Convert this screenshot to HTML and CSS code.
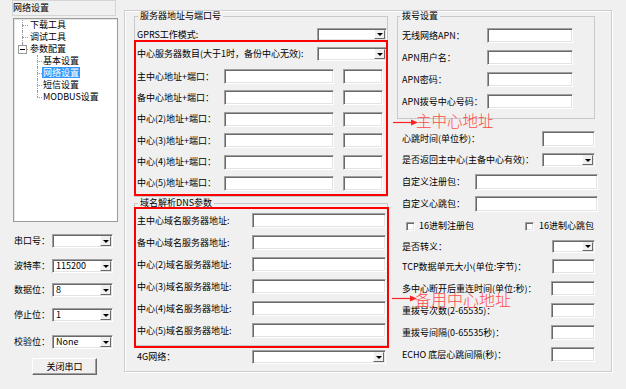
FILE: index.html
```html
<!DOCTYPE html>
<html lang="zh">
<head>
<meta charset="utf-8">
<title>网络设置</title>
<link rel="stylesheet" href="styles.css">
</head>
<body>
<div class="app">
  <aside class="side">
    <div class="side-title">网络设置</div>
    <div class="tree">
      <ul class="tree-l1">
        <li>下载工具</li>
        <li>调试工具</li>
        <li><span class="toggle"></span>参数配置
          <ul class="tree-l2">
            <li>基本设置</li>
            <li><span class="sel">网络设置</span></li>
            <li>短信设置</li>
            <li>MODBUS设置</li>
          </ul>
        </li>
      </ul>
    </div>
    <div class="serial">
      <div class="srow"><span>串口号：</span><div class="combo c-serial"><span class="cval"></span><span class="cbtn"></span></div></div>
      <div class="srow"><span>波特率：</span><div class="combo c-serial"><span class="cval">115200</span><span class="cbtn"></span></div></div>
      <div class="srow"><span>数据位：</span><div class="combo c-serial"><span class="cval">8</span><span class="cbtn"></span></div></div>
      <div class="srow"><span>停止位：</span><div class="combo c-serial"><span class="cval">1</span><span class="cbtn"></span></div></div>
      <div class="srow"><span>校验位：</span><div class="combo c-serial"><span class="cval">None</span><span class="cbtn"></span></div></div>
    </div>
    <button class="btn">关闭串口</button>
  </aside>

  <main class="outer">
    <div class="col-l">
      <fieldset class="group g-server">
        <legend>服务器地址与端口号</legend>
        <div class="srv-row r-gprs"><span>GPRS工作模式:</span><div class="combo c-srv"><span class="cval"></span><span class="cbtn"></span></div></div>
        <div class="srv-row r-count"><span>中心服务器数目(大于1时，备份中心无效):</span><div class="combo c-srv"><span class="cval"></span><span class="cbtn"></span></div></div>
        <div class="addr"><span class="lbl-addr">主中心地址+端口：</span><span class="field f-host"></span><span class="field f-port"></span></div>
        <div class="addr"><span class="lbl-addr">备中心地址+端口：</span><span class="field f-host"></span><span class="field f-port"></span></div>
        <div class="addr"><span class="lbl-addr">中心(2)地址+端口：</span><span class="field f-host"></span><span class="field f-port"></span></div>
        <div class="addr"><span class="lbl-addr">中心(3)地址+端口：</span><span class="field f-host"></span><span class="field f-port"></span></div>
        <div class="addr"><span class="lbl-addr">中心(4)地址+端口：</span><span class="field f-host"></span><span class="field f-port"></span></div>
        <div class="addr"><span class="lbl-addr">中心(5)地址+端口：</span><span class="field f-host"></span><span class="field f-port"></span></div>
      </fieldset>
      <fieldset class="group g-dns">
        <legend>域名解析DNS参数</legend>
        <div class="dns-row"><span class="lbl-dns">主中心域名服务器地址:</span><span class="field f-dns"></span></div>
        <div class="dns-row"><span class="lbl-dns">备中心域名服务器地址:</span><span class="field f-dns"></span></div>
        <div class="dns-row"><span class="lbl-dns">中心(2)域名服务器地址:</span><span class="field f-dns"></span></div>
        <div class="dns-row"><span class="lbl-dns">中心(3)域名服务器地址:</span><span class="field f-dns"></span></div>
        <div class="dns-row"><span class="lbl-dns">中心(4)域名服务器地址:</span><span class="field f-dns"></span></div>
        <div class="dns-row"><span class="lbl-dns">中心(5)域名服务器地址:</span><span class="field f-dns"></span></div>
      </fieldset>
      <div class="row-4g"><span class="lbl-dns">4G网络：</span><div class="combo c-4g"><span class="cval"></span><span class="cbtn"></span></div></div>
    </div>

    <div class="col-r">
      <fieldset class="group g-dial">
        <legend>拨号设置</legend>
        <div class="dial-row"><span class="lbl-dial">无线网络APN：</span><span class="field f-dial"></span></div>
        <div class="dial-row"><span class="lbl-dial">APN用户名：</span><span class="field f-dial"></span></div>
        <div class="dial-row"><span class="lbl-dial">APN密码：</span><span class="field f-dial"></span></div>
        <div class="dial-row"><span class="lbl-dial">APN拨号中心号码：</span><span class="field f-dial"></span></div>
      </fieldset>
      <div class="rrow r1"><span>心跳时间(单位秒)：</span><span class="field w53 h16 mr3"></span></div>
      <div class="rrow r2"><span>是否返回主中心(主备中心有效)：</span><div class="combo w53 mr3"><span class="cval"></span><span class="cbtn"></span></div></div>
      <div class="rrow r3"><span>自定义注册包：</span><span class="field w123 h16"></span></div>
      <div class="rrow r4"><span>自定义心跳包：</span><span class="field w123 h16"></span></div>
      <div class="rrow r5 checks">
        <label class="chk"><span class="box"></span>16进制注册包</label>
        <label class="chk"><span class="box"></span>16进制心跳包</label>
      </div>
      <div class="rrow r6"><span>是否转义：</span><div class="combo w43 h13 mr3"><span class="cval"></span><span class="cbtn"></span></div></div>
      <div class="rrow r7"><span>TCP数据单元大小(单位:字节)：</span><span class="field w43 mr3"></span></div>
      <div class="rrow r8"><span>多中心断开后重连时间(单位:秒)：</span><span class="field w44 mr3"></span></div>
      <div class="rrow r8"><span>重拨号次数(2-65535)：</span><span class="field w44 mr3"></span></div>
      <div class="rrow r8"><span>重拨号间隔(0-65535秒)：</span><span class="field w44 mr3"></span></div>
      <div class="rrow r8"><span>ECHO 底层心跳间隔(秒)：</span><span class="field w44 mr3"></span></div>
    </div>

    <div class="mark mark-1"></div>
    <div class="mark mark-2"></div>
    <svg class="arrow arrow-1" width="25" height="7" viewBox="0 0 25 7"><line x1="0" y1="3.5" x2="19" y2="3.5" stroke="#f22" stroke-width="1.2"/><polygon points="18,0.5 25,3.5 18,6.5" fill="#f22"/></svg>
    <span class="note note-1">主中心地址</span>
    <svg class="arrow arrow-2" width="25" height="7" viewBox="0 0 25 7"><line x1="0" y1="3.5" x2="19" y2="3.5" stroke="#f22" stroke-width="1.2"/><polygon points="18,0.5 25,3.5 18,6.5" fill="#f22"/></svg>
    <span class="note note-2">备用中心地址</span>
  </main>
</div>
</body>
</html>
```

FILE: styles.css
```css
* { box-sizing: border-box; }
html, body { margin: 0; padding: 0; }
body {
  width: 626px;
  height: 389px;
  overflow: hidden;
  background: #f0f0f0;
  color: #000;
  font-family: "Noto Sans CJK SC", "Noto Sans", sans-serif;
  font-size: 9px;
  line-height: 12px;
}
.app { display: flex; align-items: flex-start; height: 389px; }

/* ---------- left side ---------- */
.side { width: 124px; flex: none; display: flex; flex-direction: column; align-items: flex-start; }
.side-title {
  margin-left: 12px;
  width: 104px;
  height: 16px;
  border: 1px solid #d4d4d4;
  line-height: 13px;
  white-space: nowrap;
}
.tree {
  margin: 2px 0 0 13px;
  width: 105px;
  height: 204px;
  background: #fff;
  border: 1px solid #9a9a9a;
  box-shadow: inset 1px 1px 0 #e6e6e6;
}
.tree ul { list-style: none; margin: 0; }
.tree li { position: relative; line-height: 12px; white-space: nowrap; }
.tree-l1 { padding: 0 0 0 16px; }
.tree-l1 > li::before,
.tree-l2 > li::before {
  content: "";
  position: absolute;
  top: 6px;
  border-top: 1px dotted #9a9a9a;
}
.tree-l1 > li::after,
.tree-l2 > li::after {
  content: "";
  position: absolute;
  top: 0;
  bottom: 0;
  border-left: 1px dotted #9a9a9a;
}
.tree-l1 > li::before { left: -8px; width: 6px; }
.tree-l1 > li::after { left: -8px; }
.tree-l1 > li:first-child::after { top: 1px; }
.tree-l1 > li:last-child::after { bottom: auto; height: 6px; }
.tree-l2 { padding: 0 0 0 13px; }
.tree-l2 > li::before { left: -6px; width: 5px; }
.tree-l2 > li::after { left: -6px; }
.tree-l2 > li:last-child::after { bottom: auto; height: 6px; }
.toggle {
  position: absolute;
  left: -12px;
  top: 2px;
  width: 9px;
  height: 9px;
  border: 1px solid #9a9a9a;
  background: #fff;
  z-index: 1;
}
.toggle::after {
  content: "";
  position: absolute;
  left: 1px;
  top: 3px;
  width: 5px;
  border-top: 1px solid #000;
}
.sel {
  display: inline-block;
  margin-left: -1px;
  padding: 0 1px;
  line-height: 11px;
  background: #3399ff;
  color: #fff;
}

.serial { margin: 12px 0 0 14px; display: flex; flex-direction: column; }
.srow {
  display: flex;
  align-items: center;
  justify-content: space-between;
  width: 99px;
  height: 14px;
  white-space: nowrap;
}
.srow + .srow { margin-top: 11px; }
.srow:nth-child(3) { margin-top: 10px; }
.srow:nth-child(5) { margin-top: 13px; }
.c-serial { width: 61px; }

.btn {
  margin: 9px 0 0 32px;
  width: 65px;
  height: 17px;
  padding: 0;
  font: inherit;
  line-height: 13px;
  color: #000;
  background: #f0f0f0;
  border: 1px solid;
  border-color: #fff #696969 #696969 #fff;
  box-shadow: inset -1px -1px 0 #a0a0a0;
}

/* ---------- controls ---------- */
.field {
  display: block;
  flex: none;
  height: 15px;
  background: #fff;
  border: 1px solid;
  border-color: #a0a0a0 #fff #fff #a0a0a0;
  box-shadow: inset 1px 1px 0 #696969, inset -1px -1px 0 #e3e3e3;
}
.combo {
  display: flex;
  align-items: stretch;
  flex: none;
  height: 14px;
  background: #fff;
  border: 1px solid;
  border-color: #a0a0a0 #fff #fff #a0a0a0;
  box-shadow: inset 1px 1px 0 #696969, inset -1px -1px 0 #e3e3e3;
  padding: 1px;
}
.cval {
  flex: 1;
  display: flex;
  align-items: center;
  padding-left: 2px;
  line-height: 12px;
  white-space: nowrap;
}
.cbtn {
  flex: none;
  width: 11px;
  display: flex;
  align-items: center;
  justify-content: center;
  background: #f0f0f0;
  border: 1px solid;
  border-color: #f0f0f0 #696969 #696969 #fff;
}
.cbtn::after {
  content: "";
  border-left: 3px solid transparent;
  border-right: 3px solid transparent;
  border-top: 3px solid #000;
}

/* ---------- outer group ---------- */
.outer {
  position: relative;
  flex: none;
  margin-top: 10px;
  width: 488px;
  height: 362px;
  border: 1px solid #cdcdcd;
  box-shadow: inset 1px 1px 0 #fff, 1px 1px 0 #fff;
  display: flex;
  align-items: flex-start;
  gap: 9px;
  padding-left: 9px;
}
.col-l { width: 254px; flex: none; display: flex; flex-direction: column; }
.col-r { width: 201px; flex: none; display: flex; flex-direction: column; }

.group {
  margin: 0;
  min-width: 0;
  padding: 0 0 0 2px;
  border: 1px solid #c9c9c9;
}
.group legend {
  margin-left: 1px;
  padding: 0 2px;
  line-height: 10px;
  white-space: nowrap;
}
.g-server { height: 186px; }
.g-dns { height: 148px; margin-top: 1px; }
.g-dial { width: 198px; height: 108px; padding-left: 4px; }
.g-dial legend { margin-left: -2px; }

.srv-row { display: flex; align-items: center; white-space: nowrap; }
.r-gprs { height: 13px; margin-top: 7px; }
.r-count { height: 14px; margin-top: 6px; }
.c-srv { width: 70px; margin-left: auto; }
.r-gprs .c-srv { height: 13px; }

.addr { display: flex; align-items: center; height: 15px; margin-top: 6.4px; white-space: nowrap; }
.r-count + .addr { margin-top: 8px; }
.lbl-addr { width: 87px; flex: none; }
.f-host { width: 110px; }
.f-port { width: 40px; margin-left: 9px; }

.dns-row { display: flex; align-items: center; height: 15px; margin-top: 7px; white-space: nowrap; }
.g-dns legend + .dns-row { margin-top: 5px; }
.lbl-dns { width: 115px; flex: none; white-space: nowrap; }
.f-dns { width: 134px; }

.row-4g { display: flex; align-items: center; height: 14px; margin-top: 4px; padding-left: 3px; }
.c-4g { width: 134px; }

.dial-row { display: flex; align-items: center; height: 15px; margin-top: 7px; white-space: nowrap; }
.lbl-dial { width: 85px; flex: none; }
.f-dial { width: 86px; }

.rrow { display: flex; align-items: center; padding-left: 5px; white-space: nowrap; }
.rrow > .field, .rrow > .combo { margin-left: auto; }
.r1 { margin-top: 12px; height: 16px; }
.r2 { margin-top: 6px; height: 14px; }
.r3 { margin-top: 7px; height: 16px; }
.r4 { margin-top: 6px; height: 16px; }
.r5 { margin-top: 8px; height: 12px; }
.r6 { margin-top: 8px; height: 13px; }
.r7 { margin-top: 6px; height: 15px; }
.r8 { margin-top: 7px; height: 15px; }
.w53 { width: 53px; }
.w123 { width: 123px; }
.w43 { width: 43px; }
.w44 { width: 44px; }
.h16 { height: 16px; }
.h13 { height: 13px; }
.mr3 { margin-right: 3px; }

.checks { padding-left: 9px; padding-right: 4px; justify-content: space-between; }
.chk { display: flex; align-items: center; gap: 4px; }
.checks .chk + .chk { gap: 5px; }
.box {
  width: 9px;
  height: 9px;
  background: #fff;
  border: 1px solid;
  border-color: #a0a0a0 #fff #fff #a0a0a0;
  box-shadow: inset 1px 1px 0 #696969, inset -1px -1px 0 #e3e3e3;
}

/* ---------- annotations (drawn over the form) ---------- */
.mark { position: absolute; border: 2px solid #ff0000; pointer-events: none; }
.mark-1 { left: 9px; top: 29px; width: 254px; height: 156px; }
.mark-2 { left: 9px; top: 196px; width: 255px; height: 141px; }
.arrow { position: absolute; }
.arrow-1 { left: 268px; top: 108px; }
.arrow-2 { left: 267px; top: 284px; }
.note {
  position: absolute;
  font-size: 16px;
  line-height: 16px;
  color: #ff4a4a;
  white-space: nowrap;
  font-weight: 300;
}
.note-1 { left: 291px; top: 101px; font-size: 15.5px; }
.note-2 { left: 290px; top: 280px; }
```
